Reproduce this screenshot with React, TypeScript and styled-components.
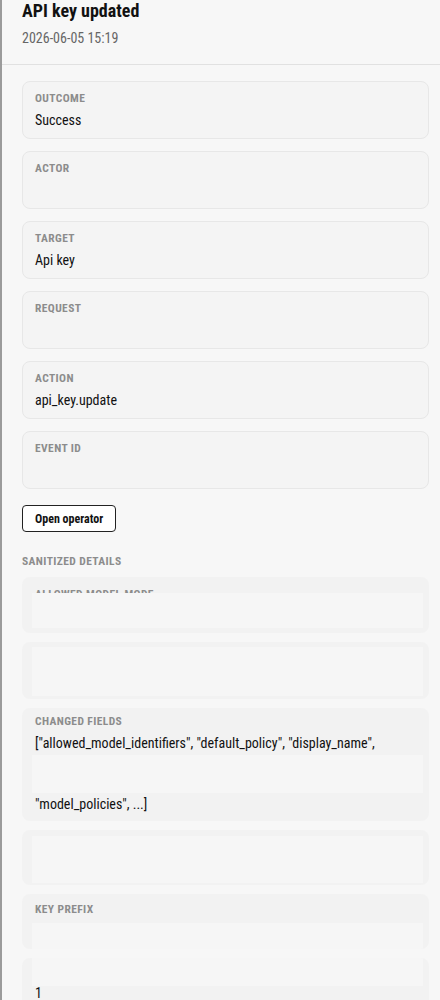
import * as React from 'react'
import styled, { createGlobalStyle } from 'styled-components'

const GlobalStyle = createGlobalStyle`
  html, body {
    margin: 0;
    padding: 0;
    background: #f7f7f7;
  }
  body {
    font-family: "Roboto Condensed", "Liberation Sans Narrow", Roboto, sans-serif;
    color: #111;
  }
`

const Drawer = styled.aside`
  min-height: 1000px;
  border-left: 2px solid #9b9b9b;
  background: #f7f7f7;
  box-sizing: border-box;
`

const Header = styled.header`
  padding: 0 22px 17px 20px;
  border-bottom: 1px solid #e1e1e1;
`

const Title = styled.h1`
  margin: 0;
  font-size: 18px;
  line-height: 22px;
  font-weight: 700;
  color: #111;
`

const Stamp = styled.div`
  margin-top: 7px;
  font-size: 14px;
  line-height: 18px;
  color: #666;
`

const Body = styled.div`
  display: flex;
  flex-direction: column;
  align-items: stretch;
  padding: 16px 11px 0 20px;
`

const FieldList = styled.div`
  display: flex;
  flex-direction: column;
  gap: 12px;
`

const Field = styled.div`
  display: flex;
  flex-direction: column;
  gap: 6px;
  padding: 9px 12px;
  border: 1px solid #e7e7e7;
  border-radius: 8px;
  background: #f4f4f4;
`

const Label = styled.div<{ $clip?: number }>`
  font-size: 11.5px;
  line-height: 14px;
  font-weight: 700;
  letter-spacing: 0.4px;
  text-transform: uppercase;
  color: #8c8c8c;
  ${({ $clip }) => ($clip ? `height: ${$clip}px; overflow: hidden;` : '')}
`

const Value = styled.div`
  font-size: 14px;
  line-height: 18px;
  min-height: 18px;
  color: #111;
`

const OperatorButton = styled.button`
  align-self: flex-start;
  margin-top: 16px;
  height: 27px;
  padding: 0 12px;
  border: 1px solid #222;
  border-radius: 4px;
  background: #fff;
  font-family: inherit;
  font-size: 12px;
  font-weight: 700;
  color: #111;
`

const SectionTitle = styled(Label)`
  margin: 22px 0 9px;
`

const DetailList = styled.div`
  display: flex;
  flex-direction: column;
  gap: 9px;
`

const Detail = styled.div<{ $h: number; $pt?: number }>`
  position: relative;
  display: flex;
  flex-direction: column;
  box-sizing: border-box;
  height: ${({ $h }) => $h}px;
  padding: ${({ $pt }) => $pt ?? 8}px 12px 0 13px;
  border-radius: 8px;
  background: #f2f2f2;
  overflow: hidden;
`

/* lighter overlay band that sits across the detail cards */
const Veil = styled.div<{ $top: number; $bottom?: number; $height?: number }>`
  position: absolute;
  left: 10px;
  right: 6px;
  top: ${({ $top }) => $top}px;
  ${({ $bottom, $height }) =>
    $height != null ? `height: ${$height}px;` : `bottom: ${$bottom ?? 0}px;`}
  background: #f6f6f6;
`

const ValueLines = styled.div`
  display: flex;
  flex-direction: column;
  gap: 43px;
  margin-top: 6px;
`

const LastValue = styled(Value)`
  margin-top: 26px;
`

const fields: { label: string; value: string }[] = [
  { label: 'Outcome', value: 'Success' },
  { label: 'Actor', value: '' },
  { label: 'Target', value: 'Api key' },
  { label: 'Request', value: '' },
  { label: 'Action', value: 'api_key.update' },
  { label: 'Event ID', value: '' },
]

export default function App() {
  return (
    <>
      <GlobalStyle />
      <Drawer>
        <Header>
          <Title>API key updated</Title>
          <Stamp>2026-06-05 15:19</Stamp>
        </Header>
        <Body>
          <FieldList>
            {fields.map((f) => (
              <Field key={f.label}>
                <Label>{f.label}</Label>
                <Value>{f.value}</Value>
              </Field>
            ))}
          </FieldList>

          <OperatorButton type="button">Open operator</OperatorButton>

          <SectionTitle>Sanitized details</SectionTitle>

          <DetailList>
            <Detail $h={56} $pt={10}>
              <Label $clip={8}>Allowed model mode</Label>
              <Veil $top={16} $bottom={5} />
            </Detail>
            <Detail $h={57}>
              <Veil $top={5} $bottom={3} />
            </Detail>
            <Detail $h={113} $pt={6}>
              <Label>Changed fields</Label>
              <ValueLines>
                <Value>["allowed_model_identifiers", "default_policy", "display_name",</Value>
                <Value>"model_policies", ...]</Value>
              </ValueLines>
              <Veil $top={47} $height={38} />
            </Detail>
            <Detail $h={55}>
              <Veil $top={6} $bottom={2} />
            </Detail>
            <Detail $h={55} $pt={8}>
              <Label>Key prefix</Label>
              <Veil $top={29} $bottom={0} />
            </Detail>
            <Detail $h={60} $pt={0}>
              <Veil $top={0} $height={28} />
              <LastValue>1</LastValue>
            </Detail>
          </DetailList>
        </Body>
      </Drawer>
    </>
  )
}
